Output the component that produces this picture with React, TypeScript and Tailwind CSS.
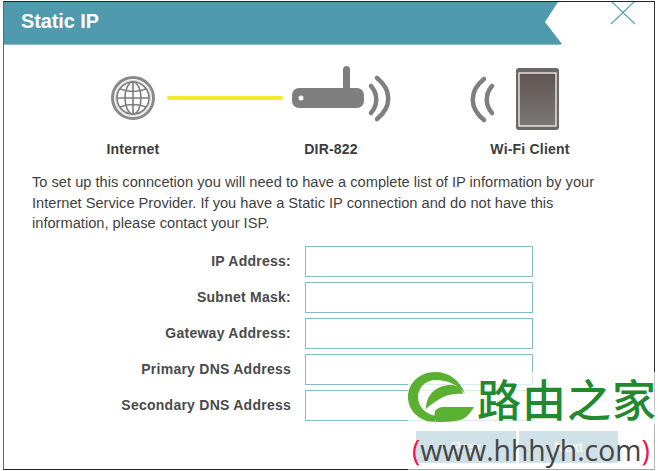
import React from "react";

const fields = ["IP Address:", "Subnet Mask:", "Gateway Address:", "Primary DNS Address", "Secondary DNS Address"];

function Globe() {
  return (
    <svg width="46" height="46" viewBox="0 0 46 46" fill="none">
      <circle cx="23" cy="23" r="20.5" stroke="#8a8a8a" strokeWidth="3" />
      <circle cx="23" cy="23" r="17.5" stroke="#d0d0d0" strokeWidth="1" />
      <g stroke="#7d7d7d" strokeWidth="1.6">
        <circle cx="23" cy="23" r="16" />
        <ellipse cx="23" cy="23" rx="8" ry="16" />
        <path d="M23 7v32M7 23h32M10 14c8 3 18 3 26 0M10 32c8-3 18-3 26 0" />
      </g>
    </svg>
  );
}

function Router() {
  return (
    <svg width="100" height="58" viewBox="0 0 100 58" fill="none">
      <rect x="51" y="0" width="7" height="24" rx="3.5" fill="#7f7f7f" />
      <rect x="0" y="22" width="72" height="20" rx="7" fill="#7f7f7f" />
      <circle cx="9" cy="32" r="2.5" fill="#fff" />
      <g stroke="#7f7f7f" strokeWidth="4.5" strokeLinecap="round">
        <path d="M79 20c7 8 7 19 0 27" />
        <path d="M85 12c15 12 15 29 0 41" />
      </g>
    </svg>
  );
}

function Tablet() {
  return (
    <svg width="90" height="64" viewBox="0 0 90 64" fill="none">
      <defs>
        <linearGradient id="screen" x1="0" y1="0" x2="0" y2="1">
          <stop offset="0" stopColor="#5f5553" />
          <stop offset="1" stopColor="#7a7875" />
        </linearGradient>
      </defs>
      <g stroke="#7f7f7f" strokeWidth="4.5" strokeLinecap="round">
        <path d="M22 19c-7 8-7 19 0 27" />
        <path d="M14 12c-15 12-15 29 0 41" />
      </g>
      <rect x="46" y="1" width="43" height="62" rx="3" fill="#6c6664" />
      <rect x="49" y="6" width="37" height="53" fill="url(#screen)" stroke="#fff" strokeWidth="1.2" />
    </svg>
  );
}

export default function App() {
  return (
    <div className="relative h-[471px] w-[658px] overflow-hidden bg-white pt-px pl-[3px] font-['Liberation_Sans',sans-serif]">
      <div className="h-[469px] w-[652px] border-t border-r border-b border-l border-t-[#222] border-r-[#333] border-b-[#222] border-l-[#666] text-[#333]">
        <div className="relative h-[43px]">
          <div className="flex h-[42px] w-[558px] items-center bg-[#4f9bad] pb-[2px] pl-[17px] text-[19.8px] font-bold text-white [clip-path:polygon(0_0,554px_0,541px_20px,558px_42px,0_42px)]">
            Static IP
          </div>
          <div className="h-px w-[557px] bg-[#8cc0cc]" />
          <svg className="absolute top-0 right-[18px]" width="26" height="23" viewBox="0 0 26 23" fill="none">
            <path d="M1 22 25 -1M1 -1 25 22" stroke="#5ba3b3" strokeWidth="1.2" />
          </svg>
        </div>

        <div className="mt-[21px] flex h-[64px] items-start pl-[106px]">
          <div className="mt-[9px]">
            <Globe />
          </div>
          <div className="mt-[30px] ml-[11px] h-[4px] w-[116px] rounded-full bg-[#f3ea2a]" />
          <div className="ml-[9px] mt-0">
            <Router />
          </div>
          <div className="ml-[78px] mt-px">
            <Tablet />
          </div>
        </div>

        <div className="mt-[11px] flex text-[14px] leading-[16px] font-bold tracking-[0.2px] text-[#3c3c3c]">
          <div className="ml-[79px] w-[100px] text-center">Internet</div>
          <div className="ml-[98px] w-[100px] text-center">DIR-822</div>
          <div className="ml-[99px] w-[100px] text-center whitespace-nowrap">Wi-Fi Client</div>
        </div>

        <p className="mt-[15px] ml-[28px] w-[610px] text-[14.65px] leading-[20.7px] text-[#3f3f3f]">
          To set up this conncetion you will need to have a complete list of IP information by your
          <br />
          Internet Service Provider. If you have a Static IP connection and do not have this
          <br />
          information, please contact your ISP.
        </p>

        <div className="mt-[12px] flex flex-col gap-[5px]">
          {fields.map((f) => (
            <div key={f} className="flex h-[31px] items-center">
              <div className="w-[287px] text-right text-[14px] font-bold tracking-[0.25px] text-[#4a4a4a]">{f}</div>
              <div className="ml-[14px] h-[31px] w-[228px] border border-[#83bcc5] bg-white" />
            </div>
          ))}
        </div>

        <div className="mt-[10px] ml-[412px] flex gap-[3px]">
          <div className="flex h-[32px] w-[100px] items-center justify-center bg-[#cfe0e6] text-[14px] text-white">Prev</div>
          <div className="flex h-[32px] w-[99px] items-center justify-center bg-[#cfe0e6] text-[14px] text-white">Next</div>
        </div>
      </div>

      <div className="absolute top-[469px] left-[408px] h-px w-[246px] bg-[#a8a8a8]" />
      <div className="absolute top-[411px] left-[654px] h-[59px] w-px bg-[#b5b5b5]" />

      <div className="absolute top-[372px] left-[408px] flex h-[52px] w-[250px] items-center bg-white/70">
        <svg width="67" height="52" viewBox="0 0 67 52" fill="none">
          <path d="M57 22C52 8 41 0 27 0 12 0 0 11 0 25c0 14 12 25 27 25l1-6C17 42 10 34 10 25 10 15 18 8 28 8c12 0 22 5 29 14Z" fill="#5ab031" />
          <path d="M18 37c0-17 14-25 27-24 5 1 9 4 10 9-9-1-18 1-25 6-5 3-9 6-12 9Z" fill="#5ab031" />
          <path d="M28 50c-2-5-2-11 0-12 2-2 4-3 7-3h31c-4 7-9 12-14 13-8 2-16 2-24 2Z" fill="#5ab031" />
        </svg>
        <span className="ml-[2px] text-[44px] leading-[52px] font-medium tracking-[1px] whitespace-nowrap text-[#1f8a2e] font-['Noto_Sans_CJK_SC',sans-serif]">路由之家</span>
      </div>
      <div className="absolute top-[432px] left-[412px] text-[28.3px] leading-[36px] whitespace-nowrap text-[#444] font-['Open_Sans',sans-serif]">
        <span className="text-[#e8174f]">(</span>www.hhhyh.com<span className="text-[#e8174f]">)</span>
      </div>
    </div>
  );
}
